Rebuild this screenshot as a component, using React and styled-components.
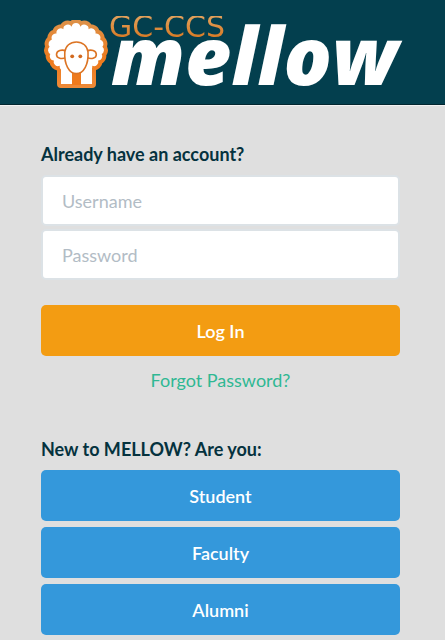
import React from 'react';
import styled, { createGlobalStyle } from 'styled-components';

const roles = ['Student', 'Faculty', 'Alumni'];

// closed ring of small outward bumps, used for the fleece
const fleece = (cx, cy, rx, ry, bumps) => {
  const points = Array.from({ length: bumps }, (_, i) => {
    const angle = ((i + 0.5) / bumps) * Math.PI * 2 - Math.PI / 2;
    return [cx + rx * Math.cos(angle), cy + ry * Math.sin(angle)].map((n) =>
      n.toFixed(2)
    );
  });
  const arcs = points
    .slice(1)
    .concat([points[0]])
    .map(([x, y]) => `A4.4 4.4 0 0 1 ${x} ${y}`);
  return `M${points[0].join(' ')}${arcs.join('')}Z`;
};

const wool = fleece(33, 28.5, 26.5, 22, 19);
const legs = 'M18 42H49V64H18Z';

const Sheep = () => (
  <SheepIcon viewBox='0 0 66 69' aria-hidden='true'>
    <defs>
      <linearGradient
        id='sheep'
        gradientUnits='userSpaceOnUse'
        x1='0'
        y1='0'
        x2='0'
        y2='68'
      >
        <stop offset='0' stopColor='#dd9148' />
        <stop offset='0.6' stopColor='#ee7a1c' />
        <stop offset='1' stopColor='#ee8a38' />
      </linearGradient>
    </defs>
    <g
      fill='url(#sheep)'
      stroke='url(#sheep)'
      strokeWidth='8'
      strokeLinejoin='round'
    >
      <path d={wool} />
      <path d={legs} />
    </g>
    <path d={wool} fill='#fff' />
    <path d={legs} fill='#fff' />
    <path d='M29 50H38V65H29Z' fill='#ee7a1c' />
    <g fill='#fff' stroke='#dc7424' strokeWidth='1.6'>
      <path d='M23 31C19 29 13.500 30.500 13.500 34.500C13.500 38.500 19 39.500 23 37.500' />
      <path d='M44 31C48 29 53.300 30.500 53.300 34.500C53.300 38.500 48 39.500 44 37.500' />
      <path d='M33.400 22C27 22 22.500 26 21.800 32C21 44 26 53.600 33.400 53.600C40.800 53.600 45.800 44 45 32C44.300 26 39.800 22 33.400 22Z' />
    </g>
    <circle cx='29.200' cy='36.300' r='1.900' fill='#d2691e' />
    <circle cx='37.300' cy='36.300' r='1.900' fill='#d2691e' />
  </SheepIcon>
);

const App = () => {
  return (
    <>
      <GlobalStyle />
      <Header>
        <Sheep />
        <Brand>
          <Org>GC-CCS</Org>
          <Name>mellow</Name>
        </Brand>
      </Header>
      <Main>
        <form onSubmit={(e) => e.preventDefault()}>
          <Title>Already have an account?</Title>
          <Stack $gap={3}>
            <Input type='text' placeholder='Username' aria-label='Username' />
            <Input
              type='password'
              placeholder='Password'
              aria-label='Password'
            />
          </Stack>
          <LoginRow>
            <Button type='submit' $color='#f39c12'>
              Log In
            </Button>
            <Forgot href='#forgot'>Forgot Password?</Forgot>
          </LoginRow>
        </form>
        <section>
          <Title>New to MELLOW? Are you:</Title>
          <Stack $gap={6}>
            {roles.map((role) => (
              <Button key={role} type='button' $color='#3498db'>
                {role}
              </Button>
            ))}
          </Stack>
        </section>
      </Main>
    </>
  );
};

const GlobalStyle = createGlobalStyle`
  * {
    box-sizing: border-box;
    margin: 0;
  }
  body {
    background: #dfdfdf;
    color: #05323e;
    font-family: Lato, sans-serif;
    font-size: 18px;
    line-height: 24px;
  }
`;

const Header = styled.header`
  display: flex;
  align-items: flex-start;
  padding: 16px 36px 14px 43px;
  background: #033f4e;
  border-bottom: 1px solid #02262f;
  box-shadow: 0 1px 0 #f2f2f2;
`;

const SheepIcon = styled.svg`
  flex: none;
  width: 66px;
  height: 69px;
  margin-top: 4px;
`;

const Brand = styled.h1`
  display: flex;
  flex-direction: column;
  height: 74px;
  color: #fff;
`;

const Org = styled.span`
  background: linear-gradient(#e2a15c, #d87a24);
  background-clip: text;
  color: transparent;
  font-family: 'DejaVu Sans', sans-serif;
  font-size: 30px;
  font-weight: 400;
  line-height: 22px;
`;

const Name = styled.span`
  padding-left: 2px;
  font-family: 'Open Sans', sans-serif;
  font-size: 80px;
  font-style: italic;
  font-weight: 800;
  line-height: 32px;
`;

const Main = styled.main`
  padding: 37px 45px 4px 41px;
`;

const Title = styled.h2`
  margin-bottom: 9px;
  font-size: 18px;
  font-weight: 700;
  line-height: 24px;
`;

const Stack = styled.div`
  display: flex;
  flex-direction: column;
  gap: ${({ $gap }) => $gap}px;
`;

const Input = styled.input`
  width: 100%;
  height: 51px;
  padding: 0 19px;
  border: 2px solid #dce2e6;
  border-radius: 5px;
  background: #fff;
  color: #05323e;
  font: inherit;
  &::placeholder {
    color: #b2bcc5;
    opacity: 1;
  }
`;

const Button = styled.button`
  width: 100%;
  height: 51px;
  border: none;
  border-radius: 5px;
  background: ${({ $color }) => $color};
  color: #fff;
  font: inherit;
  font-weight: 600;
  cursor: pointer;
`;

const LoginRow = styled.div`
  display: flex;
  flex-direction: column;
  align-items: center;
  gap: 12px;
  padding: 25px 0 45px;
`;

const Forgot = styled.a`
  color: #2fb893;
  text-decoration: none;
`;

export default App;
